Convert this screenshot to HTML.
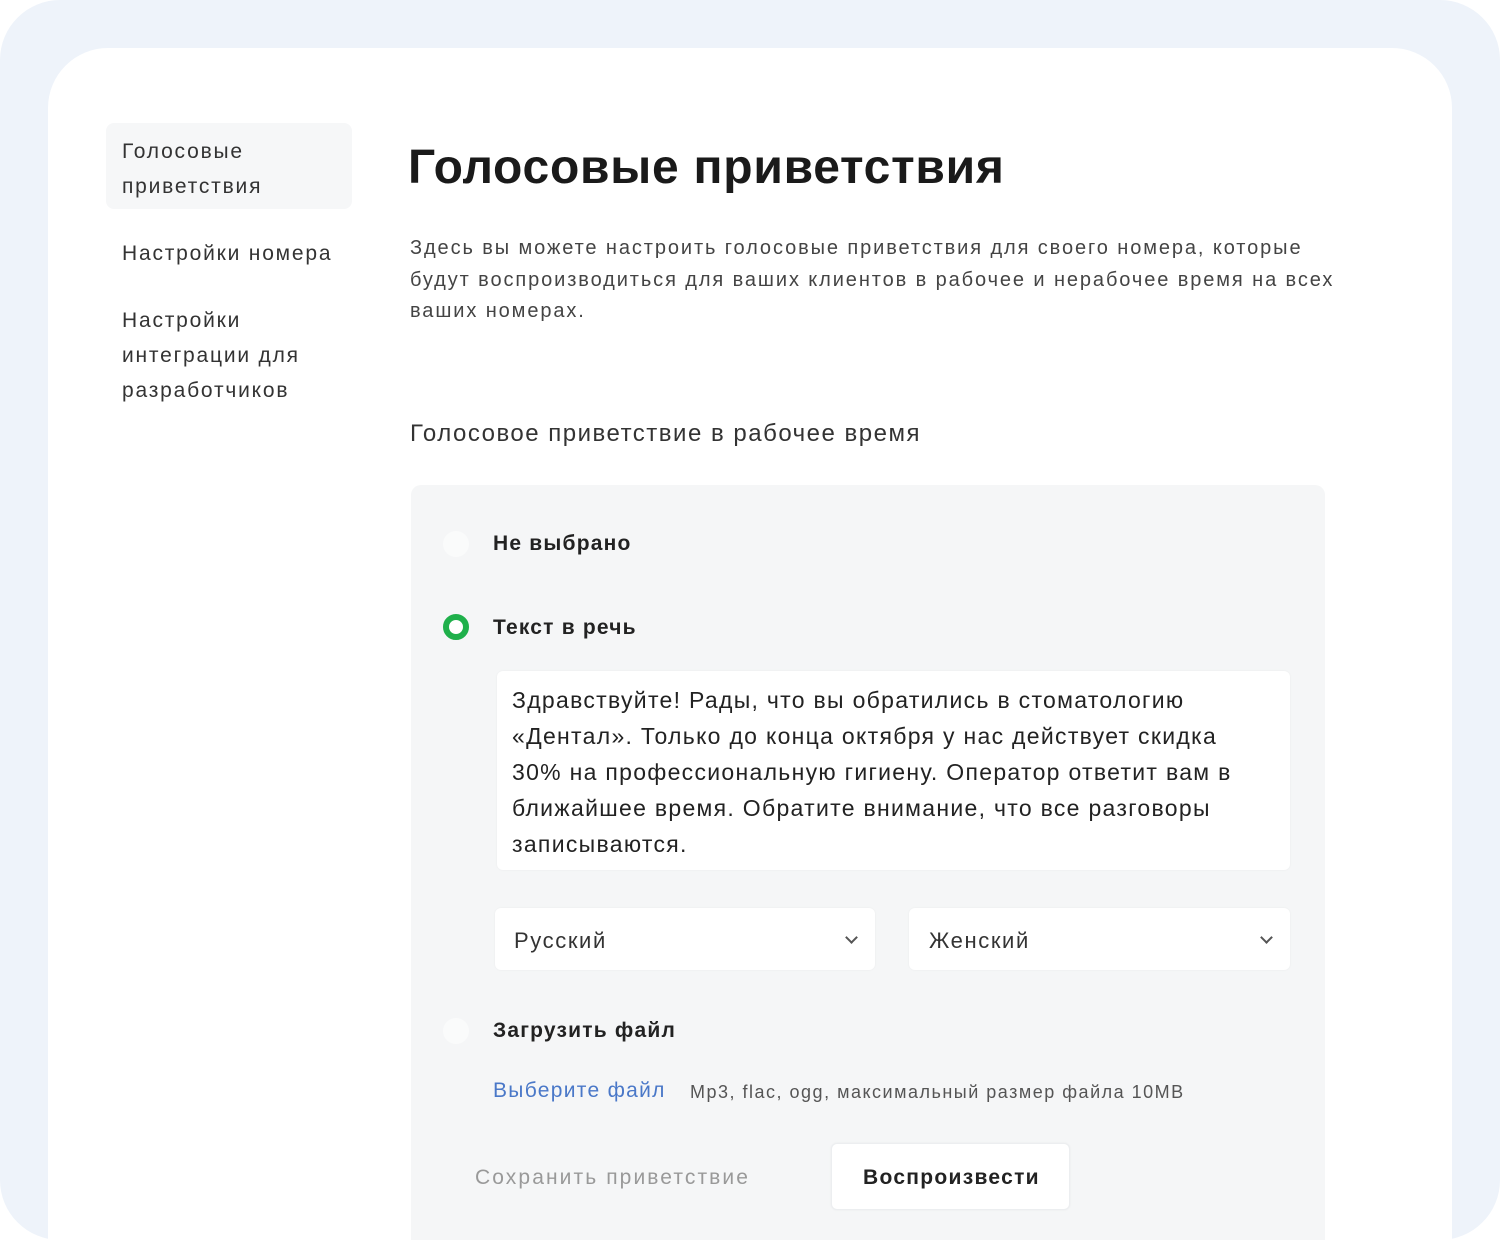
<!DOCTYPE html>
<html><head><meta charset="utf-8"><style>
*{margin:0;padding:0;box-sizing:border-box}
html,body{width:1500px;height:1240px;overflow:hidden;background:#fff}
body{font-family:"Liberation Sans","DejaVu Sans",sans-serif;color:#222;position:relative}
.bg{position:absolute;left:0;top:0;width:1500px;height:1240px;background:#eef3fa;border-radius:60px}
.card{position:absolute;left:48px;top:48px;width:1404px;height:1250px;background:#fff;border-radius:60px}
.a{position:absolute;white-space:nowrap}
.nav{font-size:21px;color:#333;line-height:35px;letter-spacing:1.8px}
.panel{position:absolute;left:411px;top:485px;width:914px;height:800px;background:#f5f6f7;border-radius:10px}
.radio{position:absolute;width:26px;height:26px;border-radius:50%;background:#fafbfb}
.lbl{font-size:21px;font-weight:bold;color:#222;letter-spacing:1.2px}
.box{position:absolute;background:#fff;border-radius:6px;box-shadow:0 0 2px rgba(0,0,0,0.05)}
.chev{position:absolute;width:9px;height:9px;border-right:2px solid #555;border-bottom:2px solid #555;transform:rotate(45deg)}
</style></head><body>
<div class="bg"></div>
<div class="card"></div>
<div class="a" style="left:106px;top:123px;width:246px;height:86px;background:#f6f7f8;border-radius:8px"></div>
<div class="a nav" style="left:122px;top:134px">Голосовые<br>приветствия</div>
<div class="a nav" style="left:122px;top:236px">Настройки номера</div>
<div class="a nav" style="left:122px;top:303px">Настройки<br>интеграции для<br>разработчиков</div>

<div class="a" style="left:408px;top:140px;font-size:48px;font-weight:bold;color:#1a1a1a;letter-spacing:0.75px">Голосовые приветствия</div>
<div class="a" style="left:410px;top:233px;font-size:20px;line-height:31.5px;color:#444;letter-spacing:1.9px">Здесь вы можете настроить голосовые приветствия для своего номера, которые<br>будут воспроизводиться для ваших клиентов в рабочее и нерабочее время на всех<br>ваших номерах.</div>
<div class="a" style="left:410px;top:420px;font-size:24px;color:#333;letter-spacing:1.5px">Голосовое приветствие в рабочее время</div>

<div class="panel"></div>
<div class="radio" style="left:443px;top:531px"></div>
<div class="a lbl" style="left:493px;top:532px">Не выбрано</div>
<div class="radio" style="left:443px;top:614px;background:#fff;border:6px solid #1fb04b"></div>
<div class="a lbl" style="left:493px;top:616px">Текст в речь</div>

<div class="box" style="left:497px;top:671px;width:793px;height:199px"></div>
<div class="a" style="left:512px;top:682px;font-size:23px;line-height:36px;color:#222;letter-spacing:1.3px">Здравствуйте! Рады, что вы обратились в стоматологию<br>«Дентал». Только до конца октября у нас действует скидка<br>30% на профессиональную гигиену. Оператор ответит вам в<br>ближайшее время. Обратите внимание, что все разговоры<br>записываются.</div>

<div class="box" style="left:495px;top:908px;width:380px;height:62px"></div>
<div class="a" style="left:514px;top:928px;font-size:22px;color:#333;letter-spacing:1.6px">Русский</div>
<div class="chev" style="left:847px;top:933px"></div>
<div class="box" style="left:909px;top:908px;width:381px;height:62px"></div>
<div class="a" style="left:929px;top:928px;font-size:22px;color:#333;letter-spacing:1.6px">Женский</div>
<div class="chev" style="left:1262px;top:933px"></div>

<div class="radio" style="left:443px;top:1018px"></div>
<div class="a lbl" style="left:493px;top:1019px">Загрузить файл</div>
<div class="a" style="left:493px;top:1079px;font-size:21px;color:#4a78c8;letter-spacing:1.3px">Выберите файл</div>
<div class="a" style="left:690px;top:1082px;font-size:18px;color:#555;letter-spacing:1.5px">Mp3, flac, ogg, максимальный размер файла 10MB</div>

<div class="a" style="left:475px;top:1166px;font-size:21px;color:#999;letter-spacing:2.1px">Сохранить приветствие</div>
<div class="box" style="left:831px;top:1143px;width:239px;height:67px;border:1px solid #eceef0"></div>
<div class="a" style="left:863px;top:1166px;font-size:21px;font-weight:bold;color:#222;letter-spacing:1.3px">Воспроизвести</div>
</body></html>
